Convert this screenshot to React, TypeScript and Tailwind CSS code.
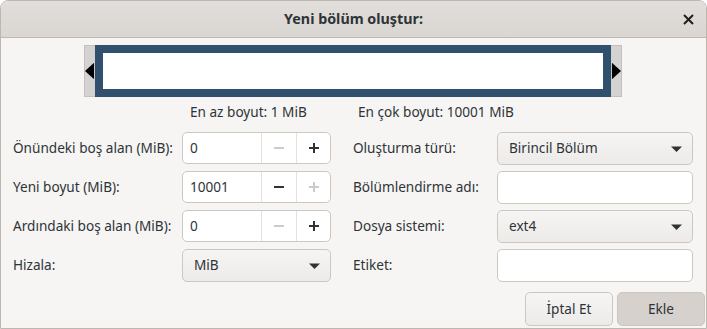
import React from "react";

const font = { fontFamily: '"Noto Sans", "DejaVu Sans", sans-serif' };

function Minus({ disabled }: { disabled?: boolean }) {
  return (
    <svg width="12" height="12" viewBox="0 0 12 12">
      <path d="M1 6h10" stroke={disabled ? "#cfcbc7" : "#2e3436"} strokeWidth="2" />
    </svg>
  );
}
function Plus({ disabled }: { disabled?: boolean }) {
  return (
    <svg width="12" height="12" viewBox="0 0 12 12">
      <path d="M1 6h10M6 1v10" stroke={disabled ? "#cfcbc7" : "#2e3436"} strokeWidth="2" />
    </svg>
  );
}
function Arrow() {
  return (
    <svg width="11" height="6" viewBox="0 0 11 6">
      <path d="M0 0.5h11L5.5 6z" fill="#2e3436" />
    </svg>
  );
}

function Spin({ value, minusDisabled, plusDisabled }: { value: string; minusDisabled?: boolean; plusDisabled?: boolean }) {
  return (
    <div className="flex h-[32px] w-[149px] overflow-hidden rounded-[5px] border border-[#cdc7c2] bg-white">
      <div className="flex flex-1 items-center pl-[7px] text-[#2e3436]">{value}</div>
      <div className="flex w-[35px] items-center justify-center border-l border-[#e6e2df]">
        <Minus disabled={minusDisabled} />
      </div>
      <div className="flex w-[34px] items-center justify-center border-l border-[#e6e2df]">
        <Plus disabled={plusDisabled} />
      </div>
    </div>
  );
}

function Combo({ value, w }: { value: string; w: string }) {
  return (
    <div
      className={`flex h-[33px] ${w} items-center justify-between rounded-[5px] border border-[#cdc7c2] bg-gradient-to-b from-[#f6f5f4] to-[#edebe9] pl-[11px] pr-[10px] text-[#2e3436]`}
    >
      <span>{value}</span>
      <Arrow />
    </div>
  );
}

function Entry() {
  return <div className="h-[33px] w-[196px] rounded-[5px] border border-[#cdc7c2] bg-white" />;
}

export default function App() {
  return (
    <div className="h-[329px] w-[707px] bg-white text-[13.6px] text-[#2e3436]" style={font}>
      <div className="flex h-full flex-col overflow-hidden rounded-t-[8px] border border-[#bdb7b1]">
        <div className="relative flex h-[37px] shrink-0 items-center justify-center border-b border-[#bfb8b1] bg-gradient-to-b from-[#e1dedb] to-[#dad6d2]">
          <span className="font-bold text-[14.3px] text-[#2e3436]">Yeni bölüm oluştur:</span>
          <svg className="absolute right-[12px] top-[13px]" width="11" height="11" viewBox="0 0 11 11">
            <path d="M1 1l9 9M10 1l-9 9" stroke="#1e1e1e" strokeWidth="2" />
          </svg>
        </div>
        <div className="flex flex-1 flex-col bg-[#f6f5f4]">
          <div className="ml-[83px] mt-[7px] flex h-[52px] w-[538px]">
            <div className="flex w-[11px] items-center border-y border-l border-[#c4c1bd] bg-[#d4d3d2]">
              <svg width="11" height="18" viewBox="0 0 11 18">
                <path d="M0 9L10 0v18z" fill="#000" />
              </svg>
            </div>
            <div className="flex-1 border-[8px] border-[#31506e] bg-white" />
            <div className="flex w-[11px] items-center border-y border-r border-[#c4c1bd] bg-[#d4d3d2]">
              <svg width="11" height="18" viewBox="0 0 11 18">
                <path d="M11 9L1 0v18z" fill="#000" />
              </svg>
            </div>
          </div>
          <div className="mt-[5px] flex h-[20px] items-center text-[13.6px]">
            <span className="ml-[189px] w-[168px]">En az boyut: 1 MiB</span>
            <span>En çok boyut: 10001 MiB</span>
          </div>
          <div className="mt-[10px] flex pl-[12px]">
            <div className="grid grid-cols-[169px_149px] gap-y-[7px]">
              <div className="flex items-center">Önündeki boş alan (MiB):</div>
              <Spin value="0" minusDisabled />
              <div className="flex items-center">Yeni boyut (MiB):</div>
              <Spin value="10001" plusDisabled />
              <div className="flex items-center">Ardındaki boş alan (MiB):</div>
              <Spin value="0" minusDisabled />
              <div className="flex items-center">Hizala:</div>
              <Combo value="MiB" w="w-[149px]" />
            </div>
            <div className="ml-[22px] grid grid-cols-[144px_196px] gap-y-[6px]">
              <div className="flex items-center">Oluşturma türü:</div>
              <Combo value="Birincil Bölüm" w="w-[196px]" />
              <div className="flex items-center">Bölümlendirme adı:</div>
              <Entry />
              <div className="flex items-center">Dosya sistemi:</div>
              <Combo value="ext4" w="w-[196px]" />
              <div className="flex items-center">Etiket:</div>
              <Entry />
            </div>
          </div>
          <div className="mt-[10px] flex justify-end gap-[4px] pr-[1px]">
            <div className="flex h-[34px] w-[88px] items-center justify-center rounded-[5px] border border-[#cdc7c2] bg-gradient-to-b from-[#f6f5f4] to-[#edebe9]">
              İptal Et
            </div>
            <div className="flex h-[34px] w-[88px] items-center justify-center rounded-[5px] border border-[#cdc7c2] bg-[#d6d1cd]">
              Ekle
            </div>
          </div>
        </div>
      </div>
    </div>
  );
}
